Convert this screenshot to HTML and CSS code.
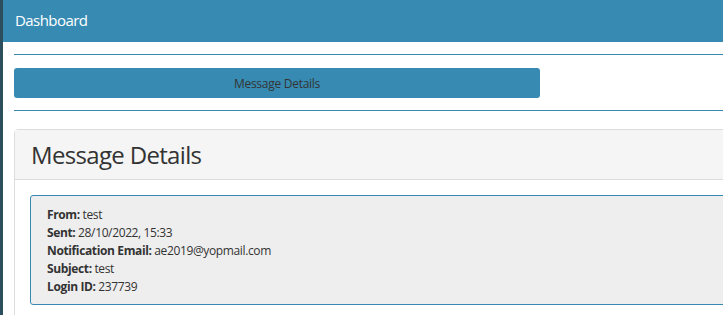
FILE: index.html
```html
<!DOCTYPE html>
<html lang="en">
<head>
    <meta charset="UTF-8">
    <meta name="viewport" content="width=device-width, initial-scale=1.0">
    <title>Message Details</title>
    <link rel="stylesheet" href="styles.css">
</head>
<body>
    <div class="layout">
        <div class="side-strip"></div>
        <div class="main">
            <div class="topbar">Dashboard</div>
            <div class="content">
                <hr class="rule">
                <button type="button" class="title-btn">Message Details</button>
                <hr class="rule">
                <div class="panel">
                    <div class="panel-heading">Message Details</div>
                    <div class="panel-body">
                        <div class="well">
                            <div><b>From:</b> test</div>
                            <div><b>Sent:</b> 28/10/2022, 15:33</div>
                            <div><b>Notification Email:</b> ae2019@yopmail.com</div>
                            <div><b>Subject:</b> test</div>
                            <div><b>Login ID:</b> 237739</div>
                        </div>
                    </div>
                </div>
            </div>
        </div>
    </div>
</body>
</html>
```

FILE: styles.css
```css
body {
    margin: 0;
    font-family: "Segoe UI", "Open Sans", "Noto Sans", sans-serif;
    color: #333;
    background: #fff;
    overflow: hidden;
}
.layout {
    display: flex;
    min-height: 100vh;
}
.side-strip {
    width: 3px;
    flex-shrink: 0;
    background-color: #2d4e5c;
}
.main {
    flex: 1;
    min-width: 0;
}
.topbar {
    height: 42px;
    line-height: 41px;
    padding-left: 12px;
    font-size: 15px;
    letter-spacing: -0.55px;
    color: #fff;
    background-color: #378bb3;
}
.content {
    padding: 12px 0 0 11px;
    width: 1000px;
}
.rule {
    border: none;
    border-top: 1px solid #378bb3;
    margin: 0;
}
.title-btn {
    display: block;
    width: 526px;
    height: 30px;
    margin: 13px 0 12px;
    padding: 0;
    font-family: inherit;
    font-size: 12px;
    letter-spacing: -0.27px;
    color: #333;
    background-color: #378bb3;
    border: none;
    border-radius: 3px;
}
.panel {
    margin-top: 18px;
    border: 1px solid #ddd;
    border-radius: 4px;
}
.panel-heading {
    padding: 10px 16px 10px 16px;
    font-size: 24px;
    line-height: 29px;
    letter-spacing: -0.67px;
    color: #333;
    background-color: #f5f5f5;
    border-bottom: 1px solid #ddd;
}
.panel-body {
    padding: 15px;
}
.well {
    padding: 10px 16px 8px;
    font-size: 12px;
    line-height: 18px;
    letter-spacing: -0.37px;
    background-color: #eee;
    border: 1px solid #378bb3;
    border-radius: 3px;
}
.well b {
    font-weight: 700;
}
```
